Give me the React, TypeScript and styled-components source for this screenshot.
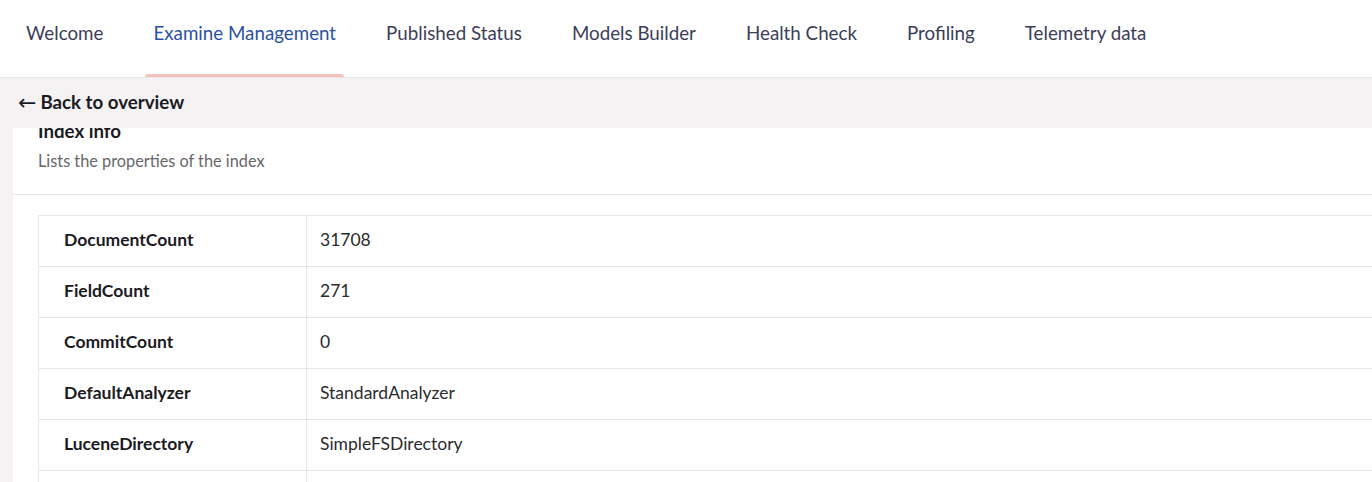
import styled, { createGlobalStyle } from 'styled-components'

const GlobalStyle = createGlobalStyle`
  html, body {
    margin: 0;
    padding: 0;
    height: 482px;
    overflow: hidden;
    background: #f4f2f3;
    font-family: Lato, 'Open Sans', sans-serif;
  }
  * {
    box-sizing: border-box;
  }
`

const tabs = [
  'Welcome',
  'Examine Management',
  'Published Status',
  'Models Builder',
  'Health Check',
  'Profiling',
  'Telemetry data',
]

const rows = [
  { name: 'DocumentCount', value: '31708' },
  { name: 'FieldCount', value: '271' },
  { name: 'CommitCount', value: '0' },
  { name: 'DefaultAnalyzer', value: 'StandardAnalyzer' },
  { name: 'LuceneDirectory', value: 'SimpleFSDirectory' },
  { name: 'LuceneIndexFolder', value: '' },
]

export default function App() {
  return (
    <>
      <GlobalStyle />
      <Page>
        <TabBar>
          {tabs.map((t) => (
            <Tab key={t} $active={t === 'Examine Management'}>
              {t}
            </Tab>
          ))}
        </TabBar>
        <BackBar>
          <BackLink>
            <Arrow>←</Arrow>
            Back to overview
          </BackLink>
        </BackBar>
        <Content>
          <Box>
            <BoxHeader>
              <Heading>Index info</Heading>
              <Subtitle>Lists the properties of the index</Subtitle>
            </BoxHeader>
            <BoxBody>
              <Table>
                <tbody>
                  {rows.map((r) => (
                    <tr key={r.name}>
                      <NameCell>{r.name}</NameCell>
                      <ValueCell>{r.value}</ValueCell>
                    </tr>
                  ))}
                </tbody>
              </Table>
            </BoxBody>
          </Box>
        </Content>
      </Page>
    </>
  )
}

const Page = styled.div`
  display: flex;
  flex-direction: column;
  height: 482px;
  overflow: hidden;
`

const TabBar = styled.nav`
  display: flex;
  align-items: stretch;
  height: 78px;
  padding-left: 1px;
  background: #fff;
  border-bottom: 1px solid #e6e5e8;
  flex-shrink: 0;
`

const Tab = styled.div<{ $active?: boolean }>`
  position: relative;
  display: flex;
  align-items: center;
  padding: 0 25px 12px;
  font-size: 18.75px;
  color: ${(p) => (p.$active ? '#2b51a1' : '#3c3e57')};
  white-space: nowrap;

  &::after {
    content: '';
    display: ${(p) => (p.$active ? 'block' : 'none')};
    position: absolute;
    left: 17px;
    right: 17px;
    bottom: 0;
    height: 3px;
    border-radius: 3px 3px 0 0;
    background: #f5c1bc;
  }
`

const BackBar = styled.div`
  display: flex;
  align-items: center;
  height: 50px;
  padding: 0 18px 3px;
  background: #f4f2f3;
  position: relative;
  z-index: 1;
  flex-shrink: 0;
`

const BackLink = styled.div`
  font-size: 18.7px;
  font-weight: 700;
  color: #1b1b1f;
`

const Arrow = styled.span`
  font-family: 'DejaVu Sans', sans-serif;
  font-weight: 400;
  font-size: 22px;
  margin-right: 4px;
  position: relative;
  top: 1px;
`

const Content = styled.main`
  flex: 1;
  padding-left: 13px;
  margin-right: -40px;
  overflow: hidden;
`

const Box = styled.section`
  margin-top: -29px;
  background: #fff;
`

const BoxHeader = styled.header`
  padding: 20px 25px 23px;
  border-bottom: 1px solid #e9e9eb;
`

const Heading = styled.h2`
  margin: 0;
  font-size: 18.7px;
  line-height: 24px;
  font-weight: 700;
  color: #1b1b1f;
`

const Subtitle = styled.p`
  margin: 8px 0 0;
  font-size: 16.3px;
  line-height: 20px;
  color: #68676b;
`

const BoxBody = styled.div`
  padding: 20px 0 0 25px;
`

const Table = styled.table`
  width: 100%;
  border-collapse: collapse;
  border: 1px solid #e6e6e6;
  border-right: none;
  font-size: 17.5px;
  color: #2b2b2e;
`

const NameCell = styled.td`
  width: 268px;
  height: 51px;
  padding: 0 25px 3px;
  font-weight: 700;
  color: #1b1b1f;
  border-top: 1px solid #e6e6e6;
  border-right: 1px solid #e6e6e6;
`

const ValueCell = styled.td`
  height: 51px;
  padding: 0 13px 3px;
  border-top: 1px solid #e6e6e6;
`
